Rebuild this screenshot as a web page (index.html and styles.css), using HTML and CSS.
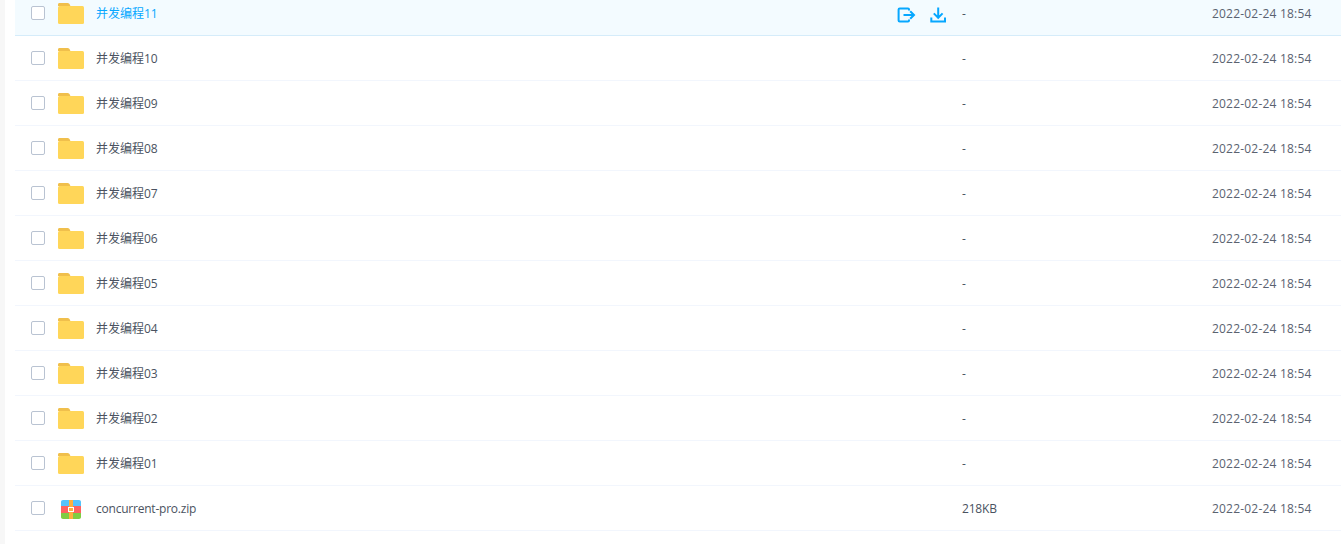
FILE: index.html
```html
<!DOCTYPE html>
<html lang="zh-CN">
<head>
<meta charset="utf-8">
<title>文件列表</title>
<link rel="stylesheet" href="styles.css">
</head>
<body>
<svg class="defs" width="0" height="0" aria-hidden="true">
  <symbol id="folder" viewBox="0 0 26 21">
    <path d="M0 1.5C0 .6.6 0 1.5 0H9.5C11 0 11.8 1 12.4 3H0Z" fill="#f0bf4c"/>
    <rect x="0" y="3" width="26" height="18" rx="1.5" fill="#ffd659"/>
  </symbol>
</svg>
<main class="list">
  <div class="row row-active">
    <span class="check"></span>
    <svg class="folder"><use href="#folder"/></svg>
    <span class="name">并发编程11</span>
    <span class="actions">
      <svg class="action" viewBox="0 0 20 18" fill="none" stroke="#06a7ff" stroke-width="2">
        <path d="M13 5.6V4.6C13 3.9 12.6 3.5 12 3.5H3.7C3 3.5 2.6 3.9 2.6 4.6V15.4C2.6 16.1 3 16.5 3.7 16.5H12C12.6 16.5 13 16.1 13 15.4V14.4"/>
        <path d="M7.5 10H18M14.2 6.2L18 10L14.2 13.8"/>
      </svg>
      <svg class="action" viewBox="0 0 20 18" fill="none" stroke="#06a7ff" stroke-width="2">
        <path d="M10.2 2.5V12.8M5.8 8.4L10.2 12.8L14.6 8.4"/>
        <path d="M3.3 12.5V16.5H17V12.5"/>
      </svg>
    </span>
    <span class="size">-</span>
    <span class="date">2022-02-24 18:54</span>
  </div>
  <div class="row"><span class="check"></span><svg class="folder"><use href="#folder"/></svg><span class="name">并发编程10</span><span class="size">-</span><span class="date">2022-02-24 18:54</span></div>
  <div class="row"><span class="check"></span><svg class="folder"><use href="#folder"/></svg><span class="name">并发编程09</span><span class="size">-</span><span class="date">2022-02-24 18:54</span></div>
  <div class="row"><span class="check"></span><svg class="folder"><use href="#folder"/></svg><span class="name">并发编程08</span><span class="size">-</span><span class="date">2022-02-24 18:54</span></div>
  <div class="row"><span class="check"></span><svg class="folder"><use href="#folder"/></svg><span class="name">并发编程07</span><span class="size">-</span><span class="date">2022-02-24 18:54</span></div>
  <div class="row"><span class="check"></span><svg class="folder"><use href="#folder"/></svg><span class="name">并发编程06</span><span class="size">-</span><span class="date">2022-02-24 18:54</span></div>
  <div class="row"><span class="check"></span><svg class="folder"><use href="#folder"/></svg><span class="name">并发编程05</span><span class="size">-</span><span class="date">2022-02-24 18:54</span></div>
  <div class="row"><span class="check"></span><svg class="folder"><use href="#folder"/></svg><span class="name">并发编程04</span><span class="size">-</span><span class="date">2022-02-24 18:54</span></div>
  <div class="row"><span class="check"></span><svg class="folder"><use href="#folder"/></svg><span class="name">并发编程03</span><span class="size">-</span><span class="date">2022-02-24 18:54</span></div>
  <div class="row"><span class="check"></span><svg class="folder"><use href="#folder"/></svg><span class="name">并发编程02</span><span class="size">-</span><span class="date">2022-02-24 18:54</span></div>
  <div class="row"><span class="check"></span><svg class="folder"><use href="#folder"/></svg><span class="name">并发编程01</span><span class="size">-</span><span class="date">2022-02-24 18:54</span></div>
  <div class="row">
    <span class="check"></span>
    <svg class="zip" viewBox="0 0 20 19">
      <path d="M2 0H18C19.2 0 20 .8 20 2V6H0V2C0 .8.8 0 2 0Z" fill="#55c3fb"/>
      <rect y="6" width="20" height="7" fill="#fd6260"/>
      <path d="M0 13H20V17C20 18.2 19.2 19 18 19H2C.8 19 0 18.2 0 17Z" fill="#7fcd42"/>
      <rect x="8" width="4" height="19" fill="#fdb03e"/>
      <rect x="7.5" y="7.5" width="5" height="4" fill="#fdb03e" stroke="#fff" stroke-width="1"/>
    </svg>
    <span class="name name-file">concurrent-pro.zip</span>
    <span class="size size-file">218KB</span>
    <span class="date">2022-02-24 18:54</span>
  </div>
</main>
</body>
</html>
```
FILE: styles.css
```css
html, body {
  margin: 0;
  height: 544px;
  overflow: hidden;
  background: #fff;
}
body {
  border-left: 5px solid #f7f7f7;
  padding-left: 10px;
  font-family: "Open Sans", "Noto Sans CJK SC", sans-serif;
  font-size: 12px;
  color: #4a5260;
}
.defs {
  position: absolute;
}
.list {
  margin-top: -9px;
}
.row {
  display: flex;
  align-items: center;
  height: 44px;
  border-bottom: 1px solid #f2f6fd;
}
.row-active {
  background: #f3fbff;
  border-bottom-color: #d5ecfa;
}
.check {
  box-sizing: border-box;
  flex: none;
  width: 14px;
  height: 14px;
  margin-left: 16px;
  border: 1px solid #b9c3d2;
  border-radius: 2px;
  background: #fff;
}
.folder {
  flex: none;
  width: 26px;
  height: 21px;
  margin: 1px 12px 0 13px;
}
.zip {
  flex: none;
  width: 20px;
  height: 19px;
  margin: 3px 15px 0 16px;
}
.name {
  flex: none;
  width: 866px;
}
.name-file {
  letter-spacing: -0.22px;
}
.row-active .name {
  width: 800px;
  color: #06a7ff;
}
.actions {
  display: flex;
  gap: 12px;
  align-items: center;
  width: 66px;
  flex: none;
}
.action {
  width: 20px;
  height: 18px;
  margin-top: 2px;
}
.size {
  flex: none;
  width: 250px;
}
.size-file {
  letter-spacing: -0.2px;
}
.date {
  flex: none;
  letter-spacing: 0.2px;
  color: #5a6270;
}
```
